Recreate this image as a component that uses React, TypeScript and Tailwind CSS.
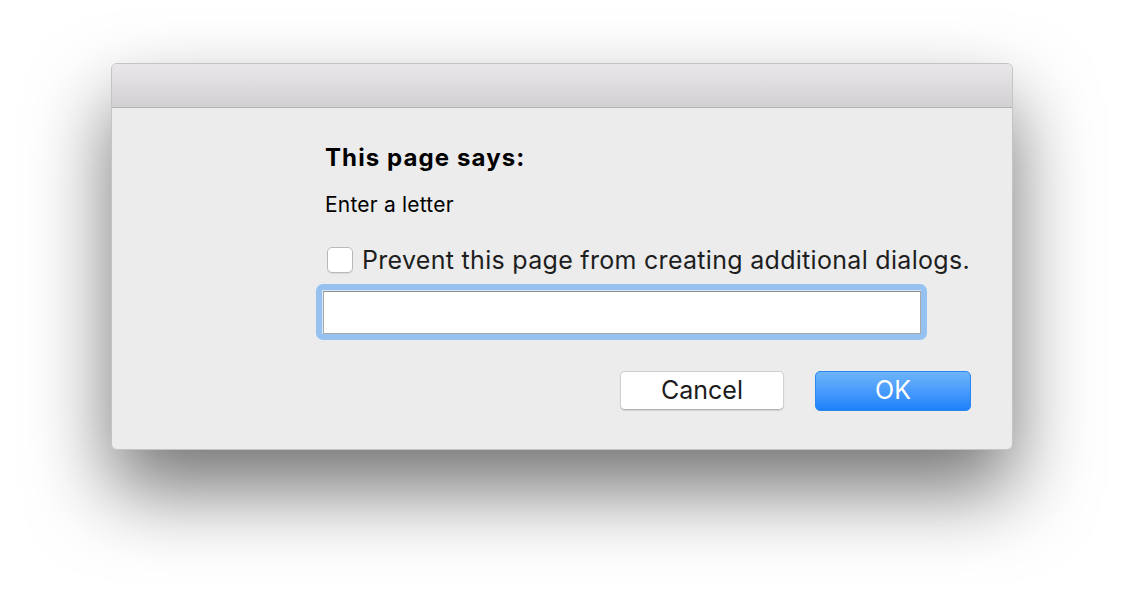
import React from "react";

const font = { fontFamily: "Inter, 'Liberation Sans', sans-serif" };

const PromptDialog = () => {
  return (
    <div
      className="w-[902px] h-[387px] rounded-[6px] bg-[#ececec] overflow-hidden border border-[#c4c4c4] shadow-[0_40px_80px_rgba(0,0,0,0.55)]"
      style={font}
    >
      {/* title bar */}
      <div className="h-[44px] bg-gradient-to-b from-[#e9e7e9] to-[#d2d0d2] border-b border-[#b3b1b3]" />

      {/* body */}
      <div className="pl-[213px] pr-[41px]">
        <h1 className="mt-[36px] h-[28px] text-[24px] leading-[28px] font-bold text-black tracking-[1.1px]">
          This page says:
        </h1>
        <p className="mt-[21px] h-[24px] text-[21px] leading-[24px] text-black tracking-[0.2px]">
          Enter a letter
        </p>

        <label className="mt-[30px] flex items-center h-[26px] gap-[9px]">
          <span className="w-[26px] h-[26px] ml-[2px] rounded-[5px] bg-white border border-[#b9b9b9] shadow-[0_1px_1px_rgba(0,0,0,0.08)]" />
          <span className="text-[25px] leading-[26px] text-[#1e1e1e] tracking-[0.3px]">
            Prevent this page from creating additional dialogs.
          </span>
        </label>

        <div className="mt-[11px] -ml-[9px] w-[611px] h-[56px] p-[6px] rounded-[7px] bg-[#96c2f2]">
          <div className="w-full h-full bg-[#d9e8f8] pl-[1px] pt-[1px]">
            <input
              className="block w-full h-full bg-white border border-[#a9a9a9] border-t-[#8e8e8e] outline-none px-1 text-[18px]"
              autoFocus
            />
          </div>
        </div>

        <div className="mt-[31px] flex justify-end gap-[31px]">
          <button className="w-[164px] h-[39px] rounded-[5px] bg-white border border-[#cfcfcf] border-b-[#b2b2b2] shadow-[0_1px_1px_rgba(0,0,0,0.12)] text-[25px] text-[#1c1c1c]">
            Cancel
          </button>
          <button className="w-[156px] h-[40px] rounded-[5px] bg-gradient-to-b from-[#6db4fa] to-[#1b81fb] border border-[#2b86f0] text-[25px] text-white">
            OK
          </button>
        </div>
      </div>
    </div>
  );
};

export default function App() {
  return (
    <div className="w-full h-[610px] bg-white flex justify-center pt-[63px] overflow-hidden">
      <PromptDialog />
    </div>
  );
}
